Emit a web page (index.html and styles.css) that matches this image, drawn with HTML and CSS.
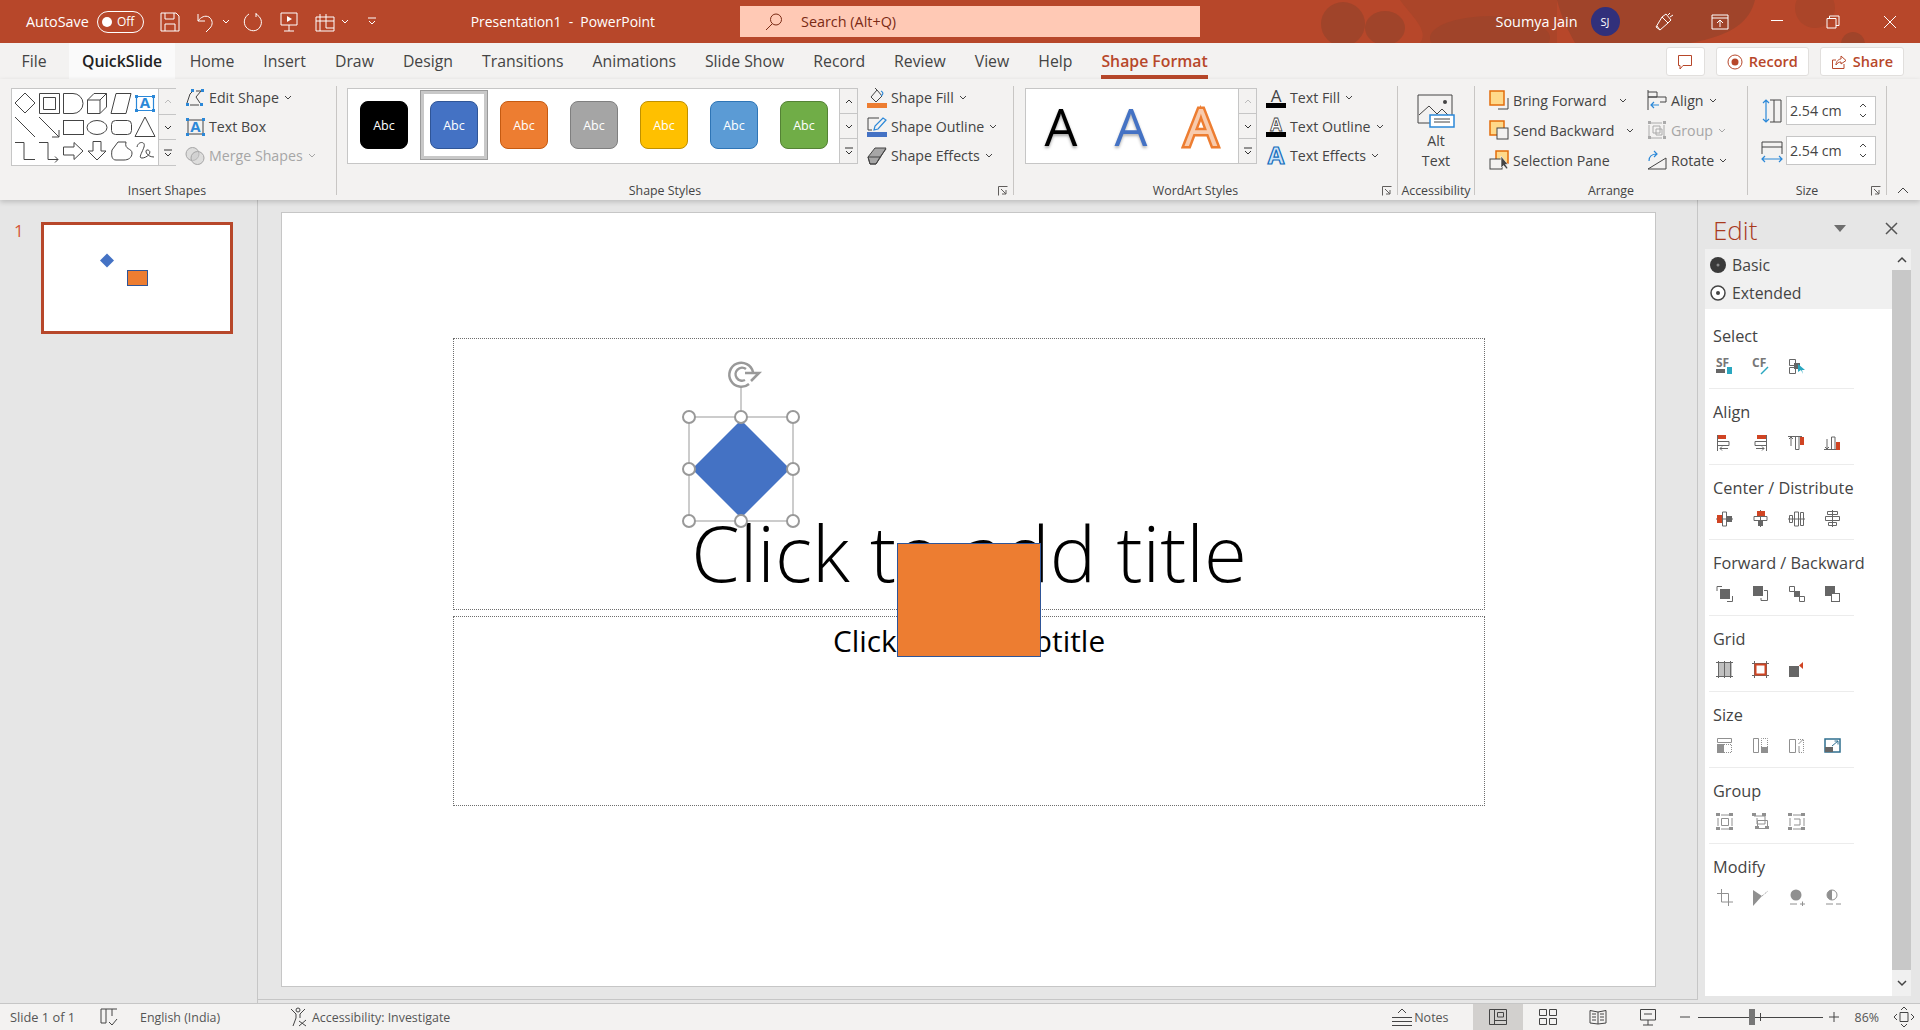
FILE: index.html
```html
<!DOCTYPE html>
<html lang="en">
<head>
    <meta charset="UTF-8">
    <title>Presentation1 - PowerPoint</title>
    <link rel="stylesheet" href="styles.css">
</head>
<body>

    <!-- Title bar -->
    <header class="titlebar">
        <svg class="blobs" width="1920" height="43" viewBox="0 0 1920 43">
            <path class="blob-soft" d="M1400 0H1557V43H1420C1430 30 1410 15 1400 0Z"/>
            <circle cx="1343" cy="24" r="22"/>
            <ellipse cx="1385" cy="28" rx="20" ry="17"/>
            <ellipse cx="1490" cy="38" rx="60" ry="22"/>
            <path d="M1557 0H1755C1750 20 1735 35 1690 43H1575C1565 25 1560 12 1557 0Z"/>
            <circle class="blob-soft" cx="1815" cy="8" r="20"/>
            <circle cx="1853" cy="44" r="12"/>
        </svg>
        <div class="title-left">
            <span class="autosave">AutoSave</span>
            <span class="toggle"><i class="toggle-dot"></i>Off</span>
            <div class="qat">
                <svg class="qi" width="20" height="20" viewBox="0 0 20 20"><path d="M1 1H16L19 4V19H1ZM5 1V7H14V1M5 19V12H15V19"/></svg>
                <svg class="qi" width="20" height="20" viewBox="0 0 20 20"><path d="M2 2V9H9M2 9C5 5 9 3 13 5C17 8 17 13 14 16L10 20"/></svg>
                <svg class="qc" width="8" height="5" viewBox="0 0 8 5"><path d="M1 1L4 4L7 1"/></svg>
                <svg class="qi" width="20" height="20" viewBox="0 0 20 20"><path d="M6 2C1 5 0 11 3 15C7 20 14 20 17 15C20 10 18 5 13 2M13 1V5"/></svg>
                <svg class="qi" width="20" height="20" viewBox="0 0 20 20"><path d="M2 1H18V13H2ZM10 13V19M5 19H15"/><path class="qfill" d="M8 4L13 7L8 10Z"/></svg>
                <svg class="qi" width="20" height="20" viewBox="0 0 20 20"><path d="M1 5H19V19H1ZM5 2V19M1 9H19M11 2V16H19"/></svg>
                <svg class="qc" width="8" height="5" viewBox="0 0 8 5"><path d="M1 1L4 4L7 1"/></svg>
                <svg class="qc qc-last" width="10" height="9" viewBox="0 0 10 9"><path d="M1 1H9M2 4L5 7L8 4"/></svg>
            </div>
            <span class="doc-title">Presentation1&nbsp; -&nbsp; PowerPoint</span>
        </div>
        <div class="search">
            <svg width="20" height="20" viewBox="0 0 20 20"><circle cx="12" cy="7.5" r="5.5"/><path d="M8 12L2 18"/></svg>
            <span>Search (Alt+Q)</span>
        </div>
        <div class="title-right">
            <span class="user">Soumya Jain</span>
            <span class="avatar">SJ</span>
            <span class="win"><svg width="20" height="20" viewBox="0 0 20 20"><path d="M2 15L8 5L14 11L6 18ZM3 14L6 18M8 5L12 2L17 8L14 11M14 3L16 1M16 5L19 3"/></svg></span>
            <span class="win"><svg width="18" height="16" viewBox="0 0 18 16"><path d="M1 1H17V15H1ZM1 4H17M9 13V6M6 9L9 6L12 9"/></svg></span>
            <span class="win"><svg width="14" height="14" viewBox="0 0 14 14"><path d="M1 5.5H13"/></svg></span>
            <span class="win"><svg width="14" height="14" viewBox="0 0 14 14"><path d="M1 3.5H10V13H1ZM3.5 3.5V1H13V10.5H10"/></svg></span>
            <span class="win"><svg width="14" height="14" viewBox="0 0 14 14"><path d="M1 1L13 13M13 1L1 13"/></svg></span>
        </div>
    </header>

    <!-- Tabs -->
    <nav class="tabs">
        <span class="tab">File</span>
        <span class="tab tab-quick">QuickSlide</span>
        <span class="tab">Home</span>
        <span class="tab">Insert</span>
        <span class="tab">Draw</span>
        <span class="tab">Design</span>
        <span class="tab">Transitions</span>
        <span class="tab">Animations</span>
        <span class="tab">Slide Show</span>
        <span class="tab">Record</span>
        <span class="tab">Review</span>
        <span class="tab">View</span>
        <span class="tab">Help</span>
        <span class="tab tab-active">Shape Format</span>
        <div class="tab-buttons">
            <span class="tbtn tbtn-comment"><svg width="16" height="16" viewBox="0 0 16 16"><path d="M1.5 1.5H14.5V11.5H6L3 15V11.5H1.5Z"/></svg></span>
            <span class="tbtn"><svg width="16" height="16" viewBox="0 0 16 16"><circle cx="8" cy="8" r="7"/><circle class="solid" cx="8" cy="8" r="3.5"/></svg>Record</span>
            <span class="tbtn"><svg width="16" height="16" viewBox="0 0 16 16"><path d="M5 14.5H1.5V6H5M5 14.5H13V10M5 11C5 7 8 5 10 5V2L15 6.5L10 10V8C8 8 6 9 5 11Z"/></svg>Share</span>
        </div>
    </nav>

    <!-- Ribbon -->
    <section class="ribbon">

        <div class="group group-shapes">
            <div class="group-body">
                <div class="gallery gallery-shapes">
                    <svg class="shape-grid" width="146" height="76" viewBox="12 89 146 76">
                        <path d="M25 93L35 103L25 113L15 103Z"/>
                        <path d="M39.5 93.5H59.5V113.5H39.5ZM43.5 97.5H55.5V109.5H43.5Z"/>
                        <path d="M63.5 93.5H73A10 10 0 0 1 73 113.5H63.5Z"/>
                        <path d="M87.5 100L94 93.5H106.5V107L100 113.5H87.5ZM87.5 100H100V113.5M100 100L106.5 93.5"/>
                        <path d="M116 93.5H131L126 113.5H111Z"/>
                        <path class="blue-line" d="M136.5 96.5H153.5V110.5H136.5Z"/>
                        <text class="blue-a" x="145" y="108" text-anchor="middle">A</text>
                        <path class="blue-fill" d="M135 95h3v3h-3zM152 95h3v3h-3zM135 109h3v3h-3zM152 109h3v3h-3z"/>
                        <path d="M15 117L35 137M39 117L59 137M59 130V137H52"/>
                        <rect x="63.5" y="120.5" width="20" height="14"/>
                        <ellipse cx="97" cy="127.5" rx="10" ry="7"/>
                        <rect x="111.5" y="120.5" width="20" height="14" rx="4"/>
                        <path d="M145 117L155 136.5H135Z"/>
                        <path d="M15 142.5H24V159.5H35M39 142.5H48V159.5H58M55 156.5L58 159.5L55 162.5"/>
                        <path d="M63.5 147H74V142.5L83 151L74 159.5V155H63.5Z"/>
                        <path d="M93 141.5H101V151H106L97 160L88 151H93Z"/>
                        <path d="M112 150L118 142H126C124 150 132 148 132 153C132 158 128 160 124 160H116C112 160 111 156 112 150Z"/>
                        <path d="M137 147C138 141 146 141 144 147C142 153 138 158 142 158C147 158 153 152 148 150C144 149 146 157 154 157"/>
                    </svg>
                    <div class="gal-scroll">
                        <span class="gal-btn gal-off"><svg width="8" height="5" viewBox="0 0 8 5"><path d="M1 4L4 1L7 4"/></svg></span>
                        <span class="gal-btn"><svg width="8" height="5" viewBox="0 0 8 5"><path d="M1 1L4 4L7 1"/></svg></span>
                        <span class="gal-btn"><svg width="10" height="8" viewBox="0 0 10 8"><path d="M1 1H9M2 4L5 7L8 4"/></svg></span>
                    </div>
                </div>
                <div class="cmds">
                    <div class="cmd"><svg class="ico" width="20" height="20" viewBox="0 0 20 20"><path d="M2 15L5 6L8 3M11 3H16L11 9L15 15M5 17H14" class="dark"/><path class="blue-fill" d="M6 1h3v3h-3zM16 1h3v3h-3zM1 15h3v3h-3zM15 15h3v3h-3z"/></svg>Edit Shape<svg class="chev" width="8" height="5" viewBox="0 0 8 5"><path d="M1 1L4 4L7 1"/></svg></div>
                    <div class="cmd"><svg class="ico" width="20" height="20" viewBox="0 0 20 20"><path d="M3 3H18V17H3Z" class="dark"/><text class="blue-a big" x="10.5" y="15" text-anchor="middle">A</text><path class="blue-fill" d="M1 1h3v3h-3zM17 1h3v3h-3zM1 16h3v3h-3zM17 16h3v3h-3z"/></svg>Text Box</div>
                    <div class="cmd cmd-off"><svg class="ico" width="20" height="20" viewBox="0 0 20 20"><circle class="disabled-fill" cx="7.5" cy="8" r="6.5"/><circle class="disabled-fill" cx="12.5" cy="12" r="6.5"/></svg>Merge Shapes<svg class="chev" width="8" height="5" viewBox="0 0 8 5"><path d="M1 1L4 4L7 1"/></svg></div>
                </div>
            </div>
            <div class="group-label">Insert Shapes</div>
        </div>

        <div class="group group-styles">
            <div class="group-body">
                <div class="gallery gallery-styles">
                    <div class="tiles">
                        <span class="tile tile-black">Abc</span>
                        <span class="tile tile-blue tile-selected">Abc</span>
                        <span class="tile tile-orange">Abc</span>
                        <span class="tile tile-gray">Abc</span>
                        <span class="tile tile-yellow">Abc</span>
                        <span class="tile tile-sky">Abc</span>
                        <span class="tile tile-green">Abc</span>
                    </div>
                    <div class="gal-scroll">
                        <span class="gal-btn"><svg width="8" height="5" viewBox="0 0 8 5"><path d="M1 4L4 1L7 4"/></svg></span>
                        <span class="gal-btn"><svg width="8" height="5" viewBox="0 0 8 5"><path d="M1 1L4 4L7 1"/></svg></span>
                        <span class="gal-btn"><svg width="10" height="8" viewBox="0 0 10 8"><path d="M1 1H9M2 4L5 7L8 4"/></svg></span>
                    </div>
                </div>
                <div class="cmds">
                    <div class="cmd"><svg class="ico" width="20" height="20" viewBox="0 0 20 20"><path class="dark" d="M4 9L10 2L15 8L9 14ZM10 2L8 0"/><path class="blue-line" d="M14 8C17 6 16 4 14 3"/><rect class="orange-fill" x="0" y="15" width="20" height="5"/></svg>Shape Fill<svg class="chev" width="8" height="5" viewBox="0 0 8 5"><path d="M1 1L4 4L7 1"/></svg></div>
                    <div class="cmd"><svg class="ico" width="20" height="20" viewBox="0 0 20 20"><path class="dark" d="M12 1H1V13H5"/><path class="blue-line" d="M7 13L8 9L16 1L19 3L11 12Z"/><rect class="blue-bar" x="0" y="15" width="20" height="5"/></svg>Shape Outline<svg class="chev" width="8" height="5" viewBox="0 0 8 5"><path d="M1 1L4 4L7 1"/></svg></div>
                    <div class="cmd"><svg class="ico" width="20" height="20" viewBox="0 0 20 20"><path class="dark gray-soft" d="M1 11L8 2H19L13 12L9 18H3Z"/><path class="dark" d="M1 11L3 18H9L13 11ZM13 11L19 3"/></svg>Shape Effects<svg class="chev" width="8" height="5" viewBox="0 0 8 5"><path d="M1 1L4 4L7 1"/></svg></div>
                </div>
            </div>
            <div class="group-label has-launcher">Shape Styles</div>
            <svg class="launcher" width="10" height="10" viewBox="0 0 10 10"><path d="M.5 9.5V.5H9.5M3 3L8 8M8 4V8H4"/></svg>
        </div>

        <div class="group group-wordart">
            <div class="group-body">
                <div class="gallery gallery-wordart">
                    <div class="art-cells">
                        <span class="art art-black">A</span>
                        <span class="art art-blue">A</span>
                        <span class="art art-orange">A</span>
                    </div>
                    <div class="gal-scroll">
                        <span class="gal-btn gal-off"><svg width="8" height="5" viewBox="0 0 8 5"><path d="M1 4L4 1L7 4"/></svg></span>
                        <span class="gal-btn"><svg width="8" height="5" viewBox="0 0 8 5"><path d="M1 1L4 4L7 1"/></svg></span>
                        <span class="gal-btn"><svg width="10" height="8" viewBox="0 0 10 8"><path d="M1 1H9M2 4L5 7L8 4"/></svg></span>
                    </div>
                </div>
                <div class="cmds">
                    <div class="cmd"><svg class="ico" width="20" height="20" viewBox="0 0 20 20"><text class="ico-a" x="10" y="14" text-anchor="middle">A</text><rect class="black-fill" y="15" width="20" height="5"/></svg>Text Fill<svg class="chev" width="8" height="5" viewBox="0 0 8 5"><path d="M1 1L4 4L7 1"/></svg></div>
                    <div class="cmd"><svg class="ico" width="20" height="20" viewBox="0 0 20 20"><text class="ico-a ico-a-line" x="10" y="14" text-anchor="middle">A</text><rect class="black-fill" y="15" width="20" height="5"/></svg>Text Outline<svg class="chev" width="8" height="5" viewBox="0 0 8 5"><path d="M1 1L4 4L7 1"/></svg></div>
                    <div class="cmd"><svg class="ico" width="20" height="20" viewBox="0 0 20 20"><text class="ico-a ico-a-fx" x="10" y="18" text-anchor="middle">A</text></svg>Text Effects<svg class="chev" width="8" height="5" viewBox="0 0 8 5"><path d="M1 1L4 4L7 1"/></svg></div>
                </div>
            </div>
            <div class="group-label has-launcher">WordArt Styles</div>
            <svg class="launcher" width="10" height="10" viewBox="0 0 10 10"><path d="M.5 9.5V.5H9.5M3 3L8 8M8 4V8H4"/></svg>
        </div>

        <div class="group group-access">
            <div class="group-body alt-text">
                <svg width="38" height="34" viewBox="0 0 38 34"><path class="dark" d="M1 1H35V29H13M1 1V29H13"/><path class="dark" d="M2 21L12 12L20 20L25 15L34 24"/><circle class="dark-fill" cx="28" cy="8" r="2"/><rect class="alt-card" x="13" y="21" width="24" height="12"/><path class="dark" d="M17 25H33M17 28H33"/></svg>
                <span>Alt<br>Text</span>
            </div>
            <div class="group-label">Accessibility</div>
        </div>

        <div class="group group-arrange">
            <div class="group-body">
                <div class="cmds cmds-wide">
                    <div class="cmd"><svg class="ico" width="20" height="20" viewBox="0 0 20 20"><path class="dark" d="M19 8V19H9"/><rect class="sq-orange" x="1" y="1" width="14" height="14"/></svg>Bring Forward<svg class="chev chev-far" width="8" height="5" viewBox="0 0 8 5"><path d="M1 1L4 4L7 1"/></svg></div>
                    <div class="cmd"><svg class="ico" width="20" height="20" viewBox="0 0 20 20"><rect class="sq-orange" x="1" y="1" width="14" height="14"/><rect class="sq-white" x="8" y="8" width="11" height="11"/></svg>Send Backward<svg class="chev chev-far" width="8" height="5" viewBox="0 0 8 5"><path d="M1 1L4 4L7 1"/></svg></div>
                    <div class="cmd"><svg class="ico" width="20" height="20" viewBox="0 0 20 20"><rect class="sq-orange" x="7" y="1" width="12" height="12"/><rect class="sq-clear" x="1" y="9" width="12" height="10"/><path class="cursor" d="M12 6V18L14.500 15.500L17.500 19L19 18L16.500 14.500H19Z"/></svg>Selection Pane</div>
                </div>
                <div class="cmds">
                    <div class="cmd"><svg class="ico" width="20" height="20" viewBox="0 0 20 20"><path class="dark" d="M1 0V20M1 2H10V7H1M1 7H19V12H13"/><path class="blue-line" d="M4 15H12M7 12L4 15L7 18"/></svg>Align<svg class="chev" width="8" height="5" viewBox="0 0 8 5"><path d="M1 1L4 4L7 1"/></svg></div>
                    <div class="cmd cmd-off"><svg class="ico" width="20" height="20" viewBox="0 0 20 20"><path class="off-line" d="M4 3H15M17 5V16M15 18H4M2 16V5M6 6H13V13H6ZM9 9H15V15H9Z"/><path class="off-fill" d="M1 1h3v3h-3zM16 1h3v3h-3zM1 16h3v3h-3zM16 16h3v3h-3z"/></svg>Group<svg class="chev" width="8" height="5" viewBox="0 0 8 5"><path d="M1 1L4 4L7 1"/></svg></div>
                    <div class="cmd"><svg class="ico" width="20" height="20" viewBox="0 0 20 20"><path class="dark" d="M1 19L19 8V19Z"/><path class="blue-line" d="M2 11C2 6 5 4 10 4M7 1L10 4L7 7"/></svg>Rotate<svg class="chev" width="8" height="5" viewBox="0 0 8 5"><path d="M1 1L4 4L7 1"/></svg></div>
                </div>
            </div>
            <div class="group-label">Arrange</div>
        </div>

        <div class="group group-size">
            <div class="group-body size-rows">
                <div class="size-row">
                    <svg class="ico" width="20" height="24" viewBox="0 0 20 24"><path class="dark" d="M8 1H19V23H8M12 1V23"/><path class="blue-line" d="M4 1V23M1 4L4 1L7 4M1 20L4 23L7 20"/></svg>
                    <div class="spin"><span>2.54 cm</span><div class="spin-arrows"><svg width="8" height="5" viewBox="0 0 8 5"><path d="M1 4L4 1L7 4"/></svg><svg width="8" height="5" viewBox="0 0 8 5"><path d="M1 1L4 4L7 1"/></svg></div></div>
                </div>
                <div class="size-row">
                    <svg class="ico" width="20" height="24" viewBox="0 0 20 24"><path class="dark" d="M0 3V15M20 3V15M0 3H20M0 8H20"/><path class="blue-line" d="M0 20H20M3 17L0 20L3 23M17 17L20 20L17 23"/></svg>
                    <div class="spin"><span>2.54 cm</span><div class="spin-arrows"><svg width="8" height="5" viewBox="0 0 8 5"><path d="M1 4L4 1L7 4"/></svg><svg width="8" height="5" viewBox="0 0 8 5"><path d="M1 1L4 4L7 1"/></svg></div></div>
                </div>
            </div>
            <div class="group-label has-launcher">Size</div>
            <svg class="launcher" width="10" height="10" viewBox="0 0 10 10"><path d="M.5 9.5V.5H9.5M3 3L8 8M8 4V8H4"/></svg>
        </div>

        <svg class="collapse" width="12" height="7" viewBox="0 0 12 7"><path d="M1 6L6 1L11 6"/></svg>
    </section>

    <!-- Main area -->
    <main class="workspace">
        <aside class="thumbs">
            <span class="thumb-num">1</span>
            <div class="thumb">
                <svg width="186" height="106" viewBox="44 225 186 106">
                    <path class="thumb-diamond" d="M107 253.500L114 260.500L107 267.500L100 260.500Z"/>
                    <rect class="thumb-rect" x="127.500" y="270.500" width="20" height="15"/>
                </svg>
            </div>
        </aside>

        <div class="editor">
            <div class="slide">
                <div class="ph ph-title">Click to add title</div>
                <div class="ph ph-sub">Click to add subtitle</div>
                <div class="orange-shape"></div>
                <svg class="selection" width="120" height="170" viewBox="680 360 120 170">
                    <path class="sel-diamond" d="M741 420L790 469L741 518L692 469Z"/>
                    <path class="sel-line" d="M689 417H793V521H689ZM741 386V417"/>
                    <path class="sel-rot" d="M749 384A12 12 0 1 1 753 372M745 380A6.500 6.500 0 1 1 746 369M745 373H759L751 381"/>
                    <circle class="sel-h" cx="689" cy="417" r="6"/><circle class="sel-h" cx="741" cy="417" r="6"/><circle class="sel-h" cx="793" cy="417" r="6"/>
                    <circle class="sel-h" cx="689" cy="469" r="6"/><circle class="sel-h" cx="793" cy="469" r="6"/>
                    <circle class="sel-h" cx="689" cy="521" r="6"/><circle class="sel-h" cx="741" cy="521" r="6"/><circle class="sel-h" cx="793" cy="521" r="6"/>
                </svg>
            </div>
        </div>

        <aside class="side">
            <div class="side-head">
                <span class="side-title">Edit</span>
                <svg class="side-drop" width="12" height="7" viewBox="0 0 12 7"><path d="M0 0H12L6 7Z"/></svg>
                <svg class="side-close" width="13" height="13" viewBox="0 0 13 13"><path d="M1 1L12 12M12 1L1 12"/></svg>
            </div>
            <div class="side-body">
                <div class="side-content">
                    <div class="radios">
                        <div class="radio"><svg width="16" height="16" viewBox="0 0 16 16"><circle class="r-on" cx="8" cy="8" r="8"/><circle class="r-dot" cx="8" cy="8" r="1.500"/></svg>Basic</div>
                        <div class="radio"><svg width="16" height="16" viewBox="0 0 16 16"><circle class="r-off" cx="8" cy="8" r="7"/><circle class="r-mid" cx="8" cy="8" r="2"/></svg>Extended</div>
                    </div>

                    <div class="sec">
                        <div class="sec-name">Select</div>
                        <div class="sec-icons">
                            <svg width="18" height="18" viewBox="0 0 18 18"><text class="sf" x="0" y="9">SF</text><rect class="g" y="11" width="9" height="4"/><rect class="t" x="11" y="9" width="5" height="7"/></svg>
                            <svg width="18" height="18" viewBox="0 0 18 18"><text class="sf" x="0" y="9">CF</text><path class="tl" d="M9 16L16 9"/></svg>
                            <svg width="18" height="18" viewBox="0 0 18 18"><path class="l" d="M1.500 1.500H7.500V7.500H1.500ZM1.500 9.500H7.500V15.500H1.500Z"/><rect class="g" x="6" y="5" width="6" height="6"/><path class="t" d="M10 6L17 12H14L15 16L13 12L10 14Z"/></svg>
                        </div>
                    </div>

                    <div class="sec">
                        <div class="sec-name">Align</div>
                        <div class="sec-icons">
                            <svg width="18" height="18" viewBox="0 0 18 18"><path class="l" d="M1.500 1V17M2 7.500H13V11.500H2M4 14.500H12M6 12.500L4 14.500L6 16.500"/><rect class="r" x="2" y="1" width="8" height="4"/></svg>
                            <svg width="18" height="18" viewBox="0 0 18 18"><path class="l" d="M14.500 1V17M14 7.500H3V11.500H14M12 14.500H4M10 12.500L12 14.500L10 16.500"/><rect class="r" x="5" y="1" width="9" height="4"/></svg>
                            <svg width="18" height="18" viewBox="0 0 18 18"><path class="l" d="M0 2.500H14M3 12V3M1 5L3 3L5 5M7.500 3V15.500H11V3"/><rect class="r" x="12" y="3" width="4" height="8"/></svg>
                            <svg width="18" height="18" viewBox="0 0 18 18"><path class="l" d="M0 15.500H14M3 5V15M1 13L3 15L5 13M7.500 15V3H11V15"/><rect class="r" x="12" y="8" width="4" height="8"/></svg>
                        </div>
                    </div>

                    <div class="sec">
                        <div class="sec-name">Center / Distribute</div>
                        <div class="sec-icons">
                            <svg width="18" height="18" viewBox="0 0 18 18"><path class="l" d="M0 9H17M6.500 2V16H10.500V2Z"/><rect class="r" x="1" y="5" width="5" height="8"/><rect class="g" x="11" y="6" width="5" height="6"/></svg>
                            <svg width="18" height="18" viewBox="0 0 18 18"><path class="l" d="M8.500 0V17M2 6.500H15V10.500H2Z"/><rect class="r" x="5" y="1" width="8" height="5"/><rect class="g" x="6" y="11" width="5" height="5"/></svg>
                            <svg width="18" height="18" viewBox="0 0 18 18"><path class="l" d="M0 9H17M1.500 5.500H4.500V12.500H1.500ZM6.500 2V16H10.500V2ZM12.500 2.500H15.500V15.500H12.500Z"/></svg>
                            <svg width="18" height="18" viewBox="0 0 18 18"><path class="l" d="M8.500 0V17M3.500 1.500H13.500V4.500H3.500ZM1.500 6.500H15.500V10.500H1.500ZM4.500 12.500H12.500V15.500H4.500Z"/></svg>
                        </div>
                    </div>

                    <div class="sec">
                        <div class="sec-name">Forward / Backward</div>
                        <div class="sec-icons">
                            <svg width="18" height="18" viewBox="0 0 18 18"><path class="l" d="M1 6V1.500H6M11 16.500H16.500V11"/><rect class="g" x="4" y="4" width="10" height="10"/></svg>
                            <svg width="18" height="18" viewBox="0 0 18 18"><rect class="g" x="1" y="1" width="10" height="10"/><path class="l" d="M12 5.500H15.500V15.500H9V13"/></svg>
                            <svg width="18" height="18" viewBox="0 0 18 18"><path class="l" d="M1.500 1.500H6.500V6.500H1.500ZM11.500 11.500H16.500V16.500H11.500Z"/><rect class="g" x="6" y="6" width="6" height="6"/></svg>
                            <svg width="18" height="18" viewBox="0 0 18 18"><rect class="g" x="1" y="1" width="10" height="10"/><rect class="lw" x="7.500" y="8.500" width="8" height="8"/></svg>
                        </div>
                    </div>

                    <div class="sec">
                        <div class="sec-name">Grid</div>
                        <div class="sec-icons">
                            <svg width="18" height="18" viewBox="0 0 18 18"><rect class="h" x="2" y="2" width="14" height="13"/><path class="l" d="M0 1.500H17M0 15.500H17M2.500 0V17M8.500 0V17M14.500 0V17"/></svg>
                            <svg width="18" height="18" viewBox="0 0 18 18"><path class="l" d="M0 2.500H17M0 14.500H17M2.500 0V17M14.500 0V17"/><rect class="fr" x="3.500" y="3.500" width="10" height="10"/></svg>
                            <svg width="18" height="18" viewBox="0 0 18 18"><rect class="g" x="1" y="5" width="10" height="11"/><path class="r" d="M15 1V8L11 4.500Z"/></svg>
                        </div>
                    </div>

                    <div class="sec">
                        <div class="sec-name">Size</div>
                        <div class="sec-icons">
                            <svg width="18" height="18" viewBox="0 0 18 18"><path class="lm" d="M1.500 1.500H15.500V5.500H1.500Z"/><rect class="gm" x="1" y="7" width="7" height="9"/><path class="dot" d="M8 7.500H15.500V15.500H8"/></svg>
                            <svg width="18" height="18" viewBox="0 0 18 18"><path class="lm" d="M1.500 1.500H6.500V15.500H1.500Z"/><rect class="gm" x="9" y="10" width="7" height="6"/><path class="dot" d="M9.500 10V1.500H15.500V10"/></svg>
                            <svg width="18" height="18" viewBox="0 0 18 18"><path class="lm" d="M1.500 2.500H7.500V15.500H1.500ZM11 9V15.500M10.500 7L15 2.500"/><path class="dot" d="M10 2.500H15.500V15.500H11"/></svg>
                            <svg width="18" height="18" viewBox="0 0 18 18"><rect class="bx" x="1" y="2" width="15" height="13"/><rect class="g" x="1" y="10" width="8" height="5"/><path class="bxl" d="M8 9L14 4M10.500 4H14V7.500"/></svg>
                        </div>
                    </div>

                    <div class="sec">
                        <div class="sec-name">Group</div>
                        <div class="sec-icons">
                            <svg width="18" height="18" viewBox="0 0 18 18"><path class="lm" d="M5.500 5.500H12.500V12.500H5.500ZM2 5V13M16 5V13M5 2H13M5 16H13"/><path class="gm" d="M0 0h4v3h-4zM13 0h4v3h-4zM0 14h4v3h-4zM13 14h4v3h-4z"/></svg>
                            <svg width="18" height="18" viewBox="0 0 18 18"><path class="lm" d="M2 3H13V11H5V5M5.500 7.500H15.500V15.500H5.500Z"/><path class="gm" d="M0 0h4v3h-4zM10 0h4v3h-4zM3 13h4v3h-4zM13 13h4v3h-4z"/></svg>
                            <svg width="18" height="18" viewBox="0 0 18 18"><path class="lm" d="M5 2H13M5 16H13M2 5V13M16 5V13M6 6H12V12H6"/><path class="gm" d="M0 0h4v3h-4zM13 0h4v3h-4zM0 14h4v3h-4zM13 14h4v3h-4z"/></svg>
                        </div>
                    </div>

                    <div class="sec sec-last">
                        <div class="sec-name">Modify</div>
                        <div class="sec-icons">
                            <svg width="18" height="18" viewBox="0 0 18 18"><path class="lm" d="M5.500 0V13H17M1 4.500H12.500V17"/></svg>
                            <svg width="18" height="18" viewBox="0 0 18 18"><path class="gm" d="M1 1L10 7L1 17Z"/><path class="dot" d="M10 7L16 2"/></svg>
                            <svg width="18" height="18" viewBox="0 0 18 18"><circle class="gm" cx="8" cy="6" r="5.500"/><path class="lm" d="M2 15H9M12 15H17M14.500 12.500V17"/></svg>
                            <svg width="18" height="18" viewBox="0 0 18 18"><circle class="lm" cx="8" cy="6" r="5"/><path class="gm" d="M8 1V11A5 5 0 0 1 8 1Z"/><path class="lm" d="M2 15H9M12 15H17"/></svg>
                        </div>
                    </div>
                </div>
                <div class="side-scroll">
                    <span class="sb-btn"><svg width="10" height="6" viewBox="0 0 10 6"><path d="M1 5L5 1L9 5"/></svg></span>
                    <span class="sb-btn sb-btn-down"><svg width="10" height="6" viewBox="0 0 10 6"><path d="M1 1L5 5L9 1"/></svg></span>
                </div>
            </div>
        </aside>
    </main>

    <!-- Status bar -->
    <footer class="status">
        <span class="st-slide">Slide 1 of 1</span>
        <svg class="st-book" width="18" height="18" viewBox="0 0 18 18"><path d="M1 1H6V15H1ZM6 1H12V8M17 1H12M9 14L12 17L17 11"/></svg>
        <span class="st-lang">English (India)</span>
        <svg class="st-person" width="18" height="20" viewBox="0 0 18 20"><circle cx="8" cy="3" r="2"/><path d="M1 2L6 7V11L3 19M15 2L10 7V11M9 14L16 19M16 13L9 19"/></svg>
        <span class="st-access">Accessibility: Investigate</span>
        <div class="st-right">
            <svg class="st-notes" width="20" height="20" viewBox="0 0 20 20"><path d="M0 10.500H20M0 14.500H20M0 18.500H20M6 6L10 2L14 6"/></svg>
            <span class="st-notes-text">Notes</span>
            <span class="view view-on"><svg width="18" height="16" viewBox="0 0 18 16"><path d="M.5.500H17.500V15.500H.5ZM5.500.500V15.500M5.500 11.500H17.500M8.500 3.500H14.500V8H8.500Z"/></svg></span>
            <span class="view"><svg width="18" height="16" viewBox="0 0 18 16"><path d="M.5.500H7.500V6.500H.5ZM10.500.500H17.500V6.500H10.500ZM.5 9.500H7.500V15.500H.5ZM10.500 9.500H17.500V15.500H10.500Z"/></svg></span>
            <span class="view"><svg width="18" height="16" viewBox="0 0 18 16"><path d="M1 1.500L9 3L17 1.500V14L9 15L1 14ZM9 3V15M3 5H7M3 8H7M3 11H7M11 5H15M11 8H15M11 11H15"/></svg></span>
            <span class="view"><svg width="18" height="18" viewBox="0 0 18 18"><path d="M1.500 1.500H16.500V12H1.500ZM9 12V17M4 17H14M5 6H13"/></svg></span>
            <svg class="z-minus" width="10" height="10" viewBox="0 0 10 10"><path d="M0 5H10"/></svg>
            <div class="zoom-track"><i class="zoom-thumb"></i><i class="zoom-tick"></i></div>
            <svg class="z-plus" width="10" height="10" viewBox="0 0 10 10"><path d="M0 5H10M5 0V10"/></svg>
            <span class="zoom-val">86%</span>
            <svg class="z-fit" width="20" height="20" viewBox="0 0 20 20"><path d="M6 5.500H14V14.500H6ZM7 3L10 0L13 3M7 17L10 20L13 17M3 7L0 10L3 13M17 7L20 10L17 13"/></svg>
        </div>
    </footer>

</body>
</html>
```

FILE: styles.css
```css
* {
    box-sizing: border-box;
}

html, body {
    margin: 0;
    height: 100%;
    overflow: hidden;
}

body {
    font-family: "Open Sans", "Noto Sans", sans-serif;
    font-size: 14.2px;
    color: #444;
    background-color: #e6e6e6;
    display: flex;
    flex-direction: column;
    width: 1920px;
    height: 1030px;
}

svg {
    flex: none;
    display: block;
    fill: none;
    stroke: none;
    overflow: visible;
}

/* Title bar */
.titlebar {
    position: relative;
    flex: 0 0 43px;
    display: flex;
    align-items: center;
    background-color: #b7472a;
    color: white;
    font-size: 14.4px;
}

.blobs {
    position: absolute;
    left: 0;
    top: 0;
    fill: #a0442a;
    overflow: hidden;
}

.blob-soft {
    fill: #ab4529;
}

.title-left {
    position: relative;
    flex: 0 0 740px;
    display: flex;
    align-items: center;
    padding-left: 26px;
}

.autosave {
    width: 62px;
    white-space: nowrap;
}

.toggle {
    margin-left: 9px;
    width: 47px;
    height: 22px;
    border: 1px solid white;
    border-radius: 11px;
    display: flex;
    align-items: center;
    font-size: 12px;
    padding-left: 4px;
    gap: 5px;
}

.toggle-dot {
    width: 10px;
    height: 10px;
    border-radius: 50%;
    background-color: white;
}

.qat {
    margin-left: 16px;
    display: flex;
    align-items: center;
    gap: 16px;
}

.qi path {
    stroke: white;
}

.qi .qfill {
    fill: white;
    stroke: none;
}

.qc {
    margin: 0 -3px 0 -10px;
}

.qc-last {
    margin: 0 0 0 5px;
}

.qc path {
    stroke: white;
}

.doc-title {
    margin-left: auto;
    padding-right: 85px;
    font-size: 13.9px;
    white-space: nowrap;
}

.search {
    position: relative;
    flex: 0 0 460px;
    height: 31px;
    background-color: #ffc9b5;
    color: #7a2a14;
    display: flex;
    align-items: center;
    padding-left: 24px;
    gap: 17px;
}

.search svg * {
    stroke: #7a2a14;
}

.title-right {
    position: relative;
    flex: 1;
    display: flex;
    align-items: center;
    justify-content: flex-end;
    padding-right: 2px;
}

.user {
    margin-right: 13px;
    white-space: nowrap;
}

.avatar {
    width: 29px;
    height: 29px;
    border-radius: 50%;
    background-color: #31307b;
    font-size: 11px;
    display: flex;
    align-items: center;
    justify-content: center;
    margin-right: 16px;
}

.win {
    width: 56.5px;
    display: flex;
    justify-content: center;
}

.win path {
    stroke: white;
}

/* Tabs */
.tabs {
    flex: 0 0 36px;
    height: 36px;
    display: flex;
    background-color: #f3f2f1;
    padding-left: 7px;
    font-size: 15.8px;
}

.tab {
    height: 36px;
    padding: 0 14.5px;
    line-height: 37px;
    white-space: nowrap;
}

.tab-quick {
    margin-left: 8px;
    padding: 0 13px;
    background-color: #fafafa;
    color: #222;
    font-weight: 600;
}

.tab-active {
    position: relative;
    color: #b7472a;
    font-weight: 600;
}

.tab-active::after {
    content: "";
    position: absolute;
    left: 14.5px;
    right: 14.5px;
    bottom: 0;
    height: 4px;
    background-color: #b7472a;
}

.tab-buttons {
    margin-left: auto;
    padding: 4px 16px 3px 0;
    display: flex;
    gap: 11px;
}

.tbtn {
    height: 29px;
    padding: 0 10px;
    display: flex;
    align-items: center;
    gap: 6px;
    background-color: white;
    border: 1px solid #e1dfdd;
    border-radius: 3px;
    color: #b7472a;
    font-weight: 600;
    font-size: 14.5px;
}

.tbtn-comment {
    width: 39px;
    padding-left: 10px;
}

.tbtn svg * {
    stroke: #b7472a;
}

.tbtn svg .solid {
    fill: #b7472a;
    stroke: none;
}

/* Ribbon */
.ribbon {
    position: relative;
    z-index: 2;
    flex: 0 0 121px;
    display: flex;
    align-items: flex-start;
    padding-top: 7px;
    background-color: #f3f2f1;
    box-shadow: 0 2px 5px rgba(0, 0, 0, 0.18);
}

.group {
    position: relative;
    height: 109px;
    display: flex;
    flex-direction: column;
    border-right: 1px solid #c8c6c4;
}

.group-shapes { width: 337px; padding-left: 11px; }
.group-styles { width: 677px; padding-left: 10px; }
.group-wordart { width: 384px; padding-left: 11px; }
.group-access { width: 77px; }
.group-arrange { width: 273px; padding-left: 14px; }
.group-size { width: 139px; padding-left: 14px; }

.group-body {
    flex: 1;
    display: flex;
    padding-top: 2px;
    min-height: 0;
}

.group-label {
    margin: 0 0 -5px;
    height: 18px;
    line-height: 18px;
    font-size: 12.4px;
    text-align: center;
    white-space: nowrap;
}

.group-shapes .group-label { margin-left: -13px; }
.group-styles .group-label { margin-left: -10px; }
.group-wordart .group-label { margin-left: -11px; }
.group-arrange .group-label { margin-left: -14px; }
.group-size .group-label { margin-left: -14px; }

.has-launcher {
    padding-right: 20px;
}

.launcher {
    position: absolute;
    right: 5px;
    bottom: -1px;
}

.launcher path {
    stroke: #605e5c;
}

.gallery {
    display: flex;
    height: 76px;
    background-color: white;
    border: 1px solid #c6c6c6;
}

.gallery-shapes { width: 165px; height: 78px; }
.gallery-styles { width: 511px; }
.gallery-wordart { width: 232px; }

.shape-grid * {
    stroke: #444;
    stroke-width: 1;
}

.shape-grid .blue-fill,
.blue-fill {
    fill: #2b88d8;
    stroke: none;
}

.shape-grid text {
    stroke: none;
}

.blue-line,
.shape-grid .blue-line {
    stroke: #2b88d8;
    stroke-width: 1.2;
}

.blue-a {
    fill: #2b88d8;
    font-size: 15px;
    font-weight: 700;
}

.blue-a.big {
    font-size: 15px;
}

.gal-scroll {
    margin-left: auto;
    flex: 0 0 18px;
    display: flex;
    flex-direction: column;
    border-left: 1px solid #c6c6c6;
}

.gal-btn {
    flex: 1;
    display: flex;
    align-items: center;
    justify-content: center;
    background-color: #f3f2f1;
    border-bottom: 1px solid #c6c6c6;
}

.gal-btn:last-child {
    border-bottom: none;
}

.gal-btn path {
    stroke: #333;
}

.gal-off path {
    stroke: #bbb;
}

.cmds {
    margin: -5px 0 0 9px;
    display: flex;
    flex-direction: column;
}

.cmd {
    height: 29px;
    display: flex;
    align-items: center;
    white-space: nowrap;
    color: #444;
}

.cmd .ico {
    margin-right: 4px;
}

.chev {
    margin-left: 5px;
}

.chev path {
    stroke: #444;
}

.chev-far {
    margin-left: 12px;
}

.cmd-off {
    color: #a6a6a6;
}

.cmd-off .chev path {
    stroke: #a6a6a6;
}

.dark {
    stroke: #444;
}

.gray-soft {
    fill: #a6a6a6;
}

.dark-fill {
    fill: #444;
}

.disabled-fill {
    fill: rgba(200, 200, 200, 0.5);
    stroke: #a6a6a6;
}

.orange-fill {
    fill: #ed7d31;
}

.blue-bar {
    fill: #4472c4;
}

.black-fill {
    fill: #000;
}

.ico-a {
    font-size: 17px;
    fill: #444;
}

.ico-a-line {
    fill: white;
    stroke: #444;
    stroke-width: 0.8;
    font-weight: 700;
}

.ico-a-fx {
    font-size: 24px;
    font-weight: 700;
    fill: #cfe4f7;
    stroke: #0f6cbd;
    stroke-width: 1.2;
}

.tiles {
    flex: 1;
    display: flex;
    gap: 22px;
    padding: 12px 0 0 12px;
}

.tile {
    position: relative;
    width: 48px;
    height: 48px;
    border-radius: 8px;
    display: flex;
    align-items: center;
    justify-content: center;
    color: white;
    font-size: 12.5px;
    border: 1px solid;
}

.tile-black { background-color: #000; border-color: #000; }
.tile-blue { background-color: #4472c4; border-color: #2f5597; }
.tile-orange { background-color: #ed7d31; border-color: #c55a11; }
.tile-gray { background-color: #a5a5a5; border-color: #7f7f7f; }
.tile-yellow { background-color: #ffc000; border-color: #bf9000; }
.tile-sky { background-color: #5b9bd5; border-color: #2e75b6; }
.tile-green { background-color: #70ad47; border-color: #548235; }

/* square ring round the chosen style */
.tile-selected::before {
    content: "";
    position: absolute;
    left: -11px;
    right: -11px;
    top: -12px;
    bottom: -12px;
    border: 4px solid #c8c8c8;
    outline: 1px solid #9a9a9a;
    outline-offset: -1px;
}

.art-cells {
    flex: 1;
    display: flex;
}

.art {
    flex: 0 0 70px;
    text-align: center;
    font-size: 52px;
    font-weight: 500;
    line-height: 74px;
}

.art-black {
    color: #000;
    text-shadow: 0 2px 3px rgba(0, 0, 0, 0.35);
}

.art-blue {
    color: #4472c4;
    text-shadow: 0 2px 3px rgba(0, 0, 0, 0.3);
}

.art-orange {
    color: #f8cbad;
    -webkit-text-stroke: 5px #ed7d31;
    paint-order: stroke fill;
}

.alt-text {
    flex-direction: column;
    align-items: center;
    padding-top: 8px;
}

.alt-text span {
    margin-top: 3px;
    text-align: center;
    line-height: 20px;
}

.alt-card {
    fill: white;
    stroke: #2b88d8;
    stroke-width: 1.5;
}

.cmds-wide {
    margin-left: 0;
    margin-right: 5px;
}

.group-arrange .cmd {
    height: 30px;
}

.group-arrange .cmds {
    margin-top: -3px;
}

.group-arrange .cmds:first-child {
    width: 144px;
}

.sq-orange {
    fill: #ffd98a;
    stroke: #e36c0a;
    stroke-width: 1.5;
}

.sq-white {
    fill: #f3f2f1;
    stroke: #444;
}

.sq-clear {
    fill: #f3f2f1;
    stroke: #444;
}

.cursor {
    fill: #444;
    stroke: white;
    stroke-width: 0.6;
}

.off-line {
    stroke: #aaa;
}

.off-fill {
    fill: #aaa;
}

.size-rows {
    flex-direction: column;
    gap: 11px;
    padding-top: 10px;
}

.size-row {
    display: flex;
    align-items: center;
    gap: 4px;
}

.spin {
    width: 90px;
    height: 29px;
    background-color: white;
    border: 1px solid #c6c6c6;
    display: flex;
    align-items: center;
    justify-content: space-between;
    padding: 0 8px 0 3px;
}

.spin-arrows {
    display: flex;
    flex-direction: column;
    gap: 5px;
}

.spin-arrows path {
    stroke: #444;
}

.collapse {
    position: absolute;
    right: 11px;
    bottom: 6px;
}

.collapse path {
    stroke: #444;
}

/* Workspace */
.workspace {
    flex: 0 0 803px;
    display: flex;
    min-height: 0;
}

.thumbs {
    flex: 0 0 258px;
    display: flex;
    padding: 22px 0 0 14px;
    border-right: 1px solid #c6c6c6;
}

.thumb-num {
    width: 27px;
    color: #d5573b;
    font-size: 17px;
    line-height: 17px;
}

.thumb {
    width: 192px;
    height: 112px;
    border: 3px solid #b7472a;
    background-color: white;
}

.thumb-diamond {
    fill: #4472c4;
}

.thumb-rect {
    fill: #ed7d31;
    stroke: #2f5597;
}

.editor {
    flex: 0 0 1440px;
    height: 800px;
    padding: 12px 0 0 23px;
    border-bottom: 1px solid #c6c6c6;
    border-right: 1px solid #c6c6c6;
}

.slide {
    position: relative;
    width: 1375px;
    height: 775px;
    background-color: white;
    border: 1px solid #c6c6c6;
}

.ph {
    position: absolute;
    left: 171px;
    width: 1032px;
    border: 1px dotted #6e6e6e;
    color: #000;
    text-align: center;
    white-space: nowrap;
}

.ph-title {
    top: 125px;
    height: 272px;
    font-size: 78px;
    font-weight: 340;
    line-height: 106px;
    padding-top: 160px;
}

.ph-sub {
    top: 403px;
    height: 190px;
    font-size: 29.8px;
    line-height: 40px;
    padding-top: 4px;
}

.orange-shape {
    position: absolute;
    left: 615px;
    top: 330px;
    width: 144px;
    height: 114px;
    background-color: #ed7d31;
    border: 1.5px solid #2f5597;
}

.selection {
    position: absolute;
    left: 398px;
    top: 147px;
}

.sel-diamond {
    fill: #4472c4;
}

.sel-line {
    stroke: #999;
}

.sel-rot {
    stroke: #999;
    stroke-width: 2.5;
}

.sel-h {
    fill: white;
    stroke: #999;
    stroke-width: 2;
}

/* Side pane */
.side {
    flex: 1;
    min-width: 0;
    display: flex;
    flex-direction: column;
}

.side-head {
    flex: 0 0 49px;
    display: flex;
    align-items: center;
    padding: 0 22px 0 15px;
}

.side-title {
    margin-top: 10px;
    color: #a93a1e;
    font-size: 26px;
    font-weight: 300;
    line-height: 32px;
}

.side-drop {
    margin: 7px 39px 0 auto;
}

.side-drop path {
    fill: #6e6e6e;
}

.side-close {
    margin-top: 7px;
}

.side-close path {
    stroke: #555;
    stroke-width: 1.5;
}

.side-body {
    margin-left: 7px;
    width: 206px;
    height: 747px;
    display: flex;
}

.side-content {
    flex: 0 0 187px;
    background-color: white;
}

.radios {
    height: 60px;
    background-color: #f0f0f0;
    padding-top: 2px;
    margin-bottom: 4px;
}

.radio {
    height: 28px;
    display: flex;
    align-items: center;
    gap: 6px;
    padding-left: 5px;
    font-size: 15.8px;
}

.r-on { fill: #3a3a3a; }
.r-dot { fill: #888; }
.r-off { fill: white; stroke: #444; stroke-width: 1.5; }
.r-mid { fill: #444; }

.sec {
    margin-left: 4px;
    width: 145px;
    height: 75.8px;
    border-bottom: 1px solid #ececec;
}

.sec-last {
    border-bottom: none;
}

.sec-name {
    padding: 12px 0 0 4px;
    font-size: 16.3px;
    line-height: 22px;
    white-space: nowrap;
}

.sec-icons {
    margin: 11px 0 0 -2px;
    display: flex;
}

.sec-icons svg {
    margin: 0 9px;
}

.sec-icons .l { stroke: #666; }
.sec-icons .lm { stroke: #909090; }
.sec-icons .lw { stroke: #666; fill: white; }
.sec-icons .g { fill: #666; }
.sec-icons .gm { fill: #909090; }
.sec-icons .r { fill: #d04423; }
.sec-icons .t { fill: #2aa7c0; }
.sec-icons .tl { stroke: #2aa7c0; stroke-width: 1.5; }
.sec-icons .h { fill: #c0c0c0; }
.sec-icons .fr { fill: white; stroke: #d04423; stroke-width: 2; }
.sec-icons .dot { stroke: #909090; stroke-dasharray: 1 1; }
.sec-icons .bx { fill: white; stroke: #2f6f8f; stroke-width: 1.5; }
.sec-icons .bxl { stroke: #2f6f8f; }
.sec-icons .sf { fill: #777; font-size: 12px; font-weight: 700; }

.side-scroll {
    flex: 0 0 19px;
    background-color: #c8c8c8;
    display: flex;
    flex-direction: column;
    justify-content: space-between;
}

.sb-btn {
    height: 21px;
    background-color: #f0f0f0;
    display: flex;
    align-items: center;
    justify-content: center;
}

.sb-btn-down {
    height: 26px;
}

.sb-btn path {
    stroke: #444;
    stroke-width: 1.5;
}

/* Status bar */
.status {
    flex: 0 0 27px;
    display: flex;
    align-items: center;
    padding-left: 10px;
    background-color: #f3f2f1;
    border-top: 1px solid #c6c6c6;
    font-size: 12.4px;
    color: #555;
    white-space: nowrap;
}

.status svg * {
    stroke: #444;
}

.st-slide { width: 65px; font-size: 12.8px; }
.st-book { margin-left: 25px; }
.st-lang { margin-left: 22px; width: 81px; }
.st-person { margin-left: 69px; }
.st-access { margin-left: 4px; }

.st-right {
    margin-left: auto;
    height: 100%;
    display: flex;
    align-items: center;
    padding-right: 6px;
}

.st-notes-text {
    margin: 0 24px 0 2px;
    font-size: 12.5px;
}

.view {
    width: 50px;
    height: 100%;
    display: flex;
    align-items: center;
    justify-content: center;
}

.view-on {
    background-color: #d2d0ce;
}

.z-minus { margin-left: 7px; }

.zoom-track {
    position: relative;
    margin-left: 8px;
    width: 125px;
    height: 1px;
    background-color: #444;
}

.zoom-thumb {
    position: absolute;
    left: 51px;
    top: -8px;
    width: 6px;
    height: 16px;
    background-color: #777;
}

.zoom-tick {
    position: absolute;
    left: 62px;
    top: -4px;
    width: 1px;
    height: 8px;
    background-color: #444;
}

.z-plus { margin-left: 6px; }

.zoom-val {
    margin: 0 15px 0 16px;
}
```
